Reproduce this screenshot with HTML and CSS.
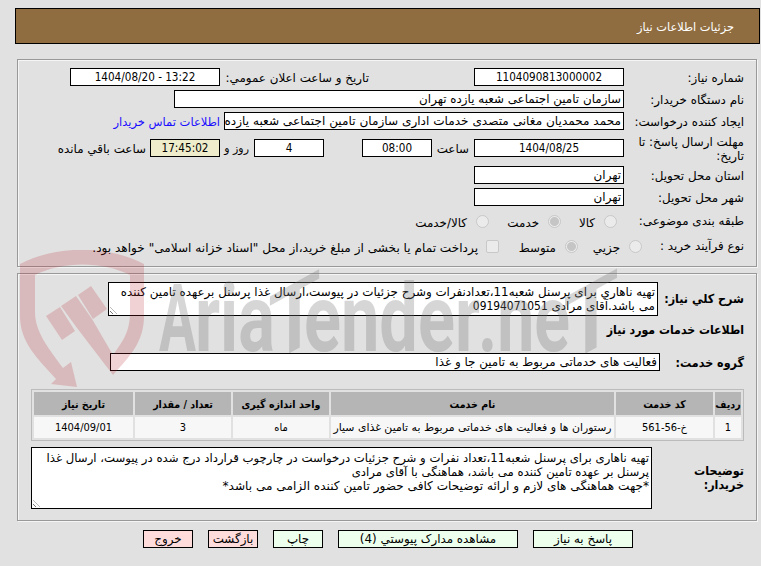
FILE: index.html
```
<!DOCTYPE html>
<html lang="fa" dir="rtl">
<head>
<meta charset="utf-8">
<title>جزئیات اطلاعات نیاز</title>
<link rel="stylesheet" href="styles.css">
</head>
<body>
<header class="title"><span>جزئیات اطلاعات نیاز</span></header>
<main>
<section class="panel request">
  <div class="row"><label class="label">شماره نیاز:</label><div class="field w150 center">1104090813000002</div><span class="announce">تاریخ و ساعت اعلان عمومي:</span><div class="field w150 center"><bdi dir="ltr">1404/08/20 - 13:22</bdi></div></div>
  <div class="row"><label class="label">نام دستگاه خریدار:</label><div class="field w450">سازمان تامین اجتماعی شعبه یازده تهران</div></div>
  <div class="row"><label class="label">ایجاد کننده درخواست:</label><div class="field w400">محمد محمدیان مغانی متصدی خدمات اداری سازمان تامین اجتماعی شعبه یازده</div><a class="contact">اطلاعات تماس خریدار</a></div>
  <div class="row deadline"><label class="label">مهلت ارسال پاسخ: تا<br>تاریخ:</label><div class="field w150 center">1404/08/25</div><span class="hour">ساعت</span><div class="field w70 center">08:00</div><div class="field w70 center days">4</div><span class="and">روز و</span><div class="field w70 center countdown">17:45:02</div><span class="remain">ساعت باقي مانده</span></div>
  <div class="row"><label class="label">استان محل تحویل:</label><div class="field w150">تهران</div></div>
  <div class="row"><label class="label">شهر محل تحویل:</label><div class="field w150">تهران</div></div>
  <div class="row options category"><label class="label">طبقه بندی موضوعی:</label><i class="radio"></i><span class="kala">کالا</span><i class="radio on"></i><span class="service">خدمت</span><i class="radio"></i><span>کالا/خدمت</span></div>
  <div class="row options process"><label class="label">نوع فرآیند خرید :</label><i class="radio"></i><span class="minor">جزیي</span><i class="radio on"></i><span class="medium">متوسط</span><i class="check"></i><span class="treasury">پرداخت تمام یا بخشی از مبلغ خرید،از محل "اسناد خزانه اسلامی" خواهد بود.</span></div>
</section>
<section class="panel details">
  <div class="row summary"><b class="label">شرح کلي نیاز:</b><div class="area"><span>تهیه ناهاري برای پرسنل شعبه11،تعدادنفرات وشرح جزئیات در پیوست،ارسال غذا پرسنل برعهده تامین کننده</span><span>می باشد.آقای مرادی <bdi class="num">09194071051</bdi></span><i class="grip"></i></div></div>
  <div class="row heading"><b>اطلاعات خدمات مورد نیاز</b></div>
  <div class="row group"><b class="label">گروه خدمت:</b><div class="field">فعالیت های خدماتی مربوط به تامین جا و غذا</div></div>
  <table class="items">
    <colgroup><col class="c1"><col class="c2"><col class="c3"><col class="c4"><col class="c5"><col class="c6"></colgroup>
    <tr><th>ردیف</th><th>کد خدمت</th><th>نام خدمت</th><th>واحد اندازه گیری</th><th>تعداد / مقدار</th><th>تاریخ نیاز</th></tr>
    <tr><td>1</td><td>خ-56-561</td><td class="name">رستوران ها و فعالیت های خدماتی مربوط به تامین غذای سیار</td><td>ماه</td><td>3</td><td>1404/09/01</td></tr>
  </table>
  <div class="row notes"><b class="label">توضیحات<br>خریدار:</b><div class="area"><span>تهیه ناهاری برای پرسنل شعبه11،تعداد نفرات و شرح جزئیات درخواست در چارچوب قرارداد درج شده در پیوست، ارسال غذا</span><span>پرسنل بر عهده تامین کننده می باشد، هماهنگی با آقای مرادی</span><span class="last">*جهت هماهنگی های لازم و ارائه توضیحات کافی حضور تامین کننده الزامی می باشد*</span><i class="grip"></i></div></div>
</section>
<nav class="actions"><button class="w100">پاسخ به نیاز</button><button class="w180">مشاهده مدارک پیوستي (4)</button><button>چاپ</button><button class="red">بازگشت</button><button class="red">خروج</button></nav>
</main>
<svg class="watermark" viewBox="0 0 610 145" width="610" height="145" aria-hidden="true">
  <g fill="#b91c27" fill-opacity=".2">
    <path d="M0 14C36-5 88-5 124 14V66C124 92 110 106 93 125L57 78L41 56L56 46L72 69L93 105C103 91 110 82 110 62V25C82 11 43 11 15 25V62C15 82 29 99 43 118L51 112L57 137L31 134L36 129C17 108 0 92 0 66Z"/>
    <path d="M26 66L40 57L55 81L42 90ZM58 45L71 36L87 59L73 69Z"/>
  </g>
  <g class="brand">
    <text x="139" y="101" textLength="37" lengthAdjust="spacingAndGlyphs">A</text>
    <text x="175" y="101" textLength="80" lengthAdjust="spacingAndGlyphs">ria</text>
    <text class="tee" transform="translate(248 115) skewY(-29)" textLength="53" lengthAdjust="spacingAndGlyphs">T</text>
    <text x="284" y="101" textLength="176" lengthAdjust="spacingAndGlyphs">ender</text>
    <text x="458" y="101" textLength="92" lengthAdjust="spacingAndGlyphs">.ne</text>
    <text class="tee" transform="translate(543 116) skewY(-29)" textLength="56" lengthAdjust="spacingAndGlyphs">T</text>
  </g>
</svg>
</body>
</html>
```
FILE: styles.css
```
*{box-sizing:border-box}
html,body{margin:0;overflow:hidden}
body{position:relative;width:761px;height:566px;background:#e1e1e1;color:#000;font:11.9px/14px "DejaVu Sans",sans-serif;white-space:nowrap}
.title{margin:8px 1px 0 15px;height:36px;border:1px solid #000;background:#8f6d40;color:#fff;padding:11px 25px 0 0;font-size:11.4px}
main{padding:15px 4px 0 17px}
.panel{border:1px solid #999;box-shadow:inset 1px 1px #f5f5f5,1px 1px #f5f5f5;width:740px;padding:8px 12px 0 0}
.request{height:208px}
.details{height:248px;margin-top:6px}
.row{display:flex;height:18px;margin-bottom:4px}
.label{width:120px;flex:none;padding-top:3px}
b{font:bold 12.4px/14px "DejaVu Sans Condensed","DejaVu Sans",sans-serif}
.field{border:1px solid #000;background:#fff;height:18px;line-height:17px;padding:0 2px;overflow:hidden;flex:none}
.w400{font-size:12.1px}
.center{text-align:center;font-family:"DejaVu Sans Condensed","DejaVu Sans",sans-serif;font-size:11.6px;line-height:16px}
.num{font-family:"DejaVu Sans Condensed","DejaVu Sans",sans-serif}
.w150{width:150px}.w450{width:450px}.w400{width:400px}.w70{width:70px}
.announce{width:254px;padding:3px 105px 0 0}
.contact{color:#1a0dff;padding:3px 4px 0 0;font-size:11.5px}
.deadline{margin:9px 0}
.deadline .label{padding:0;margin-top:-4px}
.hour{width:42px;padding:3px 5px}
.days{margin-right:38px}
.and{width:34px;padding:3px 5px;font-size:11px}
.remain{padding:3px 4px}
.countdown{background:#eeeccb}
.options{height:20px;align-items:center;margin:5px 0}
.options .label{padding:0}
.options span{padding:3px 9px 0 0}
.options .treasury{padding-right:8px;font-size:12.1px}
.category .label{width:127px}
.process .label{width:102px}
.kala{width:43px}.service{width:59px}.minor{width:51px}.medium{width:66px}
.radio{width:13px;height:13px;border:1px solid #c8c8c8;border-radius:50%;background:#ebebeb;flex:none}
.radio.on{background:radial-gradient(circle,#c5c5c5 4px,#ebebeb 5px)}
.check{width:13px;height:13px;border:1px solid #c8c8c8;border-radius:2px;background:#ebebeb;flex:none}
.area{position:relative;border:1px solid #000;background:#fff;padding:3px 2px;flex:none}
.area span{display:block}
.grip{position:absolute;left:1px;bottom:1px;width:7px;height:7px;background:repeating-linear-gradient(45deg,transparent 0 1.5px,#777 1.5px 2.2px,transparent 2.2px 3px);clip-path:polygon(0 0,100% 100%,0 100%)}
.summary{height:34px}
.summary .label{width:86px;padding-top:10px}
.summary .area{width:550px;font-size:11.9px;line-height:13.5px}
.heading{margin-top:7px}
.heading b{font-size:12.2px}
.group{margin-top:12px}
.group .label{width:84px}.group .field{width:550px}
.items{width:713px;height:51px;margin-top:18px;border:1px solid #bbb;border-spacing:2px;table-layout:fixed;font:10.6px/14px "DejaVu Sans Condensed","DejaVu Sans",sans-serif}
.c1{width:26px}.c2{width:97px}.c3{width:283px}.c4,.c5{width:96px}.c6{width:99px}
.items th{background:#b5b5b5;height:23px;padding:0}
.items td{background:#f7f7f7;height:21px;padding:0;text-align:center;font-size:11px}
.items .name{font-family:"DejaVu Sans",sans-serif;font-size:10.9px}
.notes{height:62px;margin-top:6px}
.notes .label{width:92px;padding-top:17px}
.notes .area{width:621px;font-size:11.7px}
.notes .last{font-size:12.1px}
.actions{display:flex;gap:15px;margin:9px 124px 0 0}
button{width:50px;height:18px;border:1px solid #000;background:#edffed;color:#000;padding:0;font:inherit;line-height:16px}
.w100{width:100px}.w180{width:180px}.red{background:#ffdcdc}
.watermark{position:absolute;left:20px;top:250px;pointer-events:none;direction:ltr}
.brand{font:bold 95px/1 "Roboto",sans-serif;fill:#777;fill-opacity:.3}
.tee{font-weight:500}
```
